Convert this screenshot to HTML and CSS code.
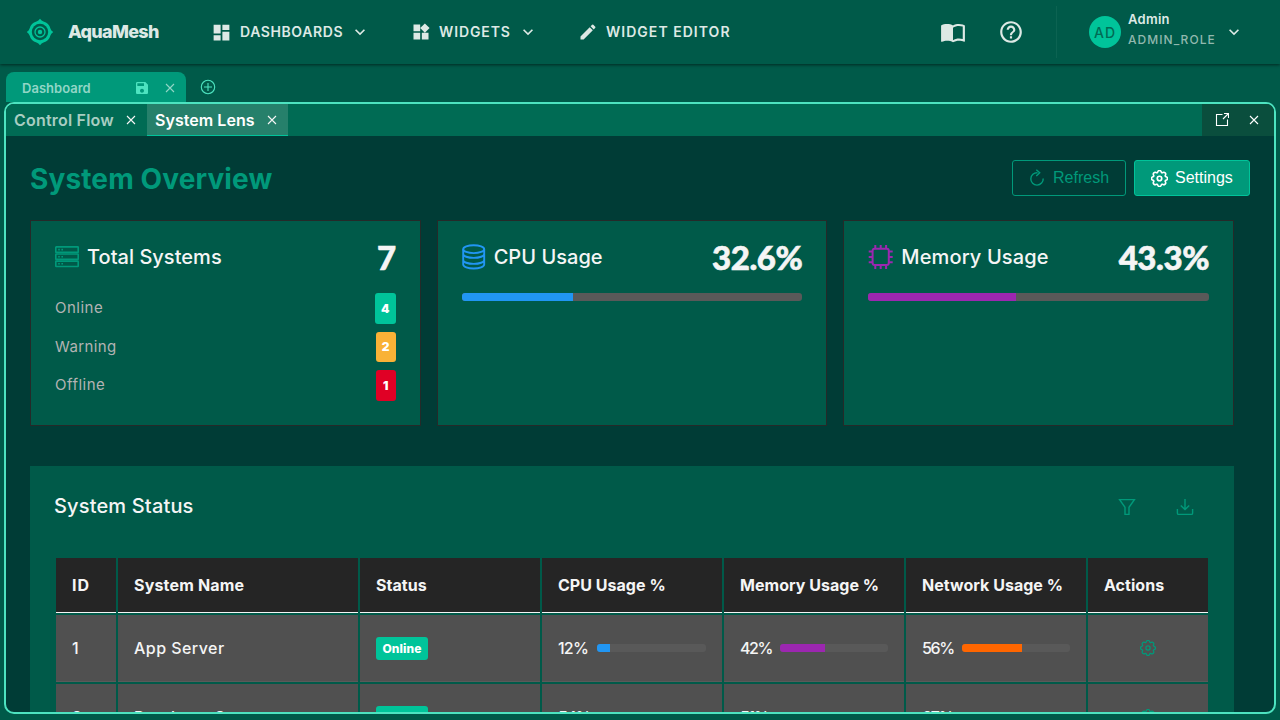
FILE: index.html
```html
<!DOCTYPE html>
<html lang="en">
<head>
<meta charset="utf-8">
<title>AquaMesh</title>
<link rel="stylesheet" href="styles.css">
</head>
<body>
<svg class="defs" width="0" height="0">
  <symbol id="chevron" viewBox="0 0 24 24"><path fill="currentColor" d="M7.41 8.59 12 13.17l4.59-4.58L18 10l-6 6-6-6z"/></symbol>
  <symbol id="close" viewBox="0 0 10 10"><path d="M1 1l8 8M9 1l-8 8" fill="none" stroke="currentColor" stroke-width="1.1"/></symbol>
  <symbol id="gear" viewBox="0 0 16 16"><g fill="none" stroke="currentColor"><circle cx="8" cy="8" r="2.1"/><path transform="translate(.5 .5) scale(.9375)" d="M9.796 1.343c-.527-1.79-3.065-1.79-3.592 0l-.094.319a.873.873 0 0 1-1.255.52l-.292-.16c-1.64-.892-3.433.902-2.54 2.541l.159.292a.873.873 0 0 1-.52 1.255l-.319.094c-1.79.527-1.79 3.065 0 3.592l.319.094a.873.873 0 0 1 .52 1.255l-.16.292c-.892 1.64.901 3.434 2.541 2.54l.292-.159a.873.873 0 0 1 1.255.52l.094.319c.527 1.79 3.065 1.79 3.592 0l.094-.319a.873.873 0 0 1 1.255-.52l.292.16c1.64.893 3.434-.902 2.54-2.541l-.159-.292a.873.873 0 0 1 .52-1.255l.319-.094c1.79-.527 1.79-3.065 0-3.592l-.319-.094a.873.873 0 0 1-.52-1.255l.16-.292c.893-1.64-.902-3.433-2.541-2.54l-.292.159a.873.873 0 0 1-1.255-.52z"/></g></symbol>
</svg>

<header class="navbar">
  <svg class="logo" width="28" height="28" viewBox="0 0 28 28"><path d="M14 .8Q15.500 3 17.500 3.600Q23 5 24.400 10.500Q25 12.500 27.200 14Q25 15.500 24.400 17.500Q23 23 17.500 24.400Q15.500 25 14 27.200Q12.500 25 10.500 24.400Q5 23 3.600 17.500Q3 15.500 .8 14Q3 12.500 3.600 10.500Q5 5 10.500 3.600Q12.500 3 14 .8z" fill="#00c49a"/><circle cx="14" cy="14" r="8.200" fill="#005a49"/><circle cx="14" cy="14" r="5" fill="none" stroke="#00c49a" stroke-width="1.300"/><circle cx="14" cy="14" r="2.200" fill="#00c49a"/></svg>
  <span class="brand">AquaMesh</span>
  <a class="nav-item dashboards"><svg width="21" height="21" viewBox="0 0 24 24"><path fill="currentColor" d="M3 13h8V3H3v10zm0 8h8v-6H3v6zm10 0h8V11h-8v10zm0-18v6h8V3h-8z"/></svg><span>DASHBOARDS</span><svg class="chev" width="20" height="20"><use href="#chevron"/></svg></a>
  <a class="nav-item widgets"><svg width="20" height="20" viewBox="0 0 24 24"><path fill="currentColor" d="M13 13v8h8v-8h-8zM3 21h8v-8H3v8zM3 3v8h8V3H3zm13.660-1.310L11 7.340 16.660 13l5.660-5.660-5.660-5.650z"/></svg><span>WIDGETS</span><svg class="chev" width="20" height="20"><use href="#chevron"/></svg></a>
  <a class="nav-item editor"><svg width="20" height="20" viewBox="0 0 24 24"><path fill="currentColor" d="M3 17.250V21h3.750L17.810 9.940l-3.750-3.750L3 17.250zM20.710 7.040c.39-.39.39-1.020 0-1.410l-2.340-2.340a1 1 0 0 0-1.410 0l-1.830 1.830 3.750 3.750 1.830-1.830z"/></svg><span>WIDGET EDITOR</span></a>
  <div class="nav-right">
    <svg width="26" height="26" viewBox="0 0 24 24"><path fill="currentColor" d="M21 5c-1.110-.35-2.330-.5-3.500-.5-1.950 0-4.050.4-5.500 1.500-1.450-1.100-3.550-1.500-5.500-1.500S2.450 4.900 1 6v14.650c0 .25.25.5.5.5.1 0 .15-.05.25-.05C3.100 20.450 5.050 20 6.500 20c1.950 0 4.050.4 5.500 1.500 1.350-.85 3.800-1.500 5.500-1.500 1.650 0 3.350.3 4.750 1.050.1.05.15.05.25.05.25 0 .5-.25.5-.5V6c-.6-.45-1.250-.75-2-1zm0 13.500c-1.100-.35-2.300-.5-3.500-.5-1.700 0-4.150.65-5.500 1.500V8c1.350-.85 3.800-1.500 5.500-1.500 1.200 0 2.400.15 3.500.5v11.500z"/></svg>
    <svg width="26" height="26" viewBox="0 0 24 24"><path fill="currentColor" d="M11 18h2v-2h-2v2zm1-16C6.480 2 2 6.480 2 12s4.480 10 10 10 10-4.480 10-10S17.520 2 12 2zm0 18c-4.410 0-8-3.590-8-8s3.590-8 8-8 8 3.590 8 8-3.590 8-8 8zm0-14c-2.210 0-4 1.790-4 4h2c0-1.100.9-2 2-2s2 .9 2 2c0 2-3 1.750-3 5h2c0-2.250 3-2.500 3-5 0-2.210-1.790-4-4-4z"/></svg>
    <div class="user">
      <span class="avatar">AD</span>
      <div class="who"><div class="name">Admin</div><div class="role">ADMIN_ROLE</div></div>
      <svg class="chev" width="20" height="20"><use href="#chevron"/></svg>
    </div>
  </div>
</header>

<div class="doc-tabs">
  <div class="doc-tab"><span>Dashboard</span>
    <svg width="16" height="16" viewBox="0 0 24 24"><path fill="currentColor" d="M17 3H5c-1.110 0-2 .9-2 2v14c0 1.100.89 2 2 2h14c1.100 0 2-.9 2-2V7l-4-4zm-5 16c-1.660 0-3-1.340-3-3s1.340-3 3-3 3 1.340 3 3-1.340 3-3 3zm3-10H5V5h10v4z"/></svg>
    <svg class="doc-close" width="10" height="10"><use href="#close"/></svg>
  </div>
  <svg class="add" width="16" height="16" viewBox="0 0 16 16"><g fill="none" stroke="currentColor" stroke-width="1.100"><circle cx="8" cy="8" r="6.700"/><path d="M8 4v8M4 8h8"/></g></svg>
</div>

<main class="panel">
  <div class="panel-tabs">
    <div class="panel-tab"><span>Control Flow</span><svg width="10" height="10"><use href="#close"/></svg></div>
    <div class="panel-tab active"><span>System Lens</span><svg width="10" height="10"><use href="#close"/></svg></div>
    <div class="panel-actions">
      <svg width="14" height="14" viewBox="0 0 14 14"><path fill="none" stroke="currentColor" stroke-width="1.100" d="M7.500 1.500H1.500v11H12.500V6.500M9 .5h4.500V5M13.500.5L8 6"/></svg>
      <svg width="10" height="10"><use href="#close"/></svg>
    </div>
  </div>

  <div class="content">
    <div class="page-head">
      <h1>System Overview</h1>
      <button class="btn ghost"><svg width="16" height="18" viewBox="0 0 16 18"><path fill="none" stroke="currentColor" stroke-width="1.400" d="M8.500 3.700A6.200 6.200 0 1 0 14.200 9.500M7.300.7l3.400 3-3.400 3.200"/></svg><span>Refresh</span></button>
      <button class="btn solid"><svg width="17" height="17" stroke-width="1.600"><use href="#gear"/></svg><span>Settings</span></button>
    </div>

    <div class="cards">
      <section class="card">
        <div class="card-head">
          <svg class="server" width="24" height="22" viewBox="0 0 24 22"><g fill="none" stroke="currentColor" stroke-width="1.600"><rect x=".8" y=".9" width="22.400" height="5.400" rx=".4"/><rect x=".8" y="8" width="22.400" height="5.400" rx=".4"/><rect x=".8" y="15.100" width="22.400" height="5.400" rx=".4"/><path d="M3.200 3.600h1.600M6.400 3.600H8M3.200 10.700h1.600M6.400 10.700H8M3.200 17.800h1.600M6.400 17.800H8"/></g></svg>
          <h2 class="t1">Total Systems</h2><strong class="count">7</strong>
        </div>
        <div class="stat"><span>Online</span><b class="ok">4</b></div>
        <div class="stat"><span class="warn-label">Warning</span><b class="warn">2</b></div>
        <div class="stat"><span>Offline</span><b class="bad">1</b></div>
      </section>
      <section class="card">
        <div class="card-head">
          <svg class="db" width="24" height="26" viewBox="0 0 24 26"><g fill="none" stroke="currentColor" stroke-width="1.900"><ellipse cx="11.700" cy="5.200" rx="10.500" ry="3.900"/><path d="M1.200 5.200v15.400c0 2.100 4.700 3.900 10.500 3.900s10.500-1.800 10.500-3.900V5.200M1.200 10c0 2.100 4.700 3.900 10.500 3.900s10.500-1.800 10.500-3.900M1.200 16c0 2.100 4.700 3.900 10.500 3.900s10.500-1.800 10.500-3.900"/></g></svg>
          <h2>CPU Usage</h2><strong>32.6%</strong>
        </div>
        <div class="bar"><i class="blue" style="width:32.600%"></i></div>
      </section>
      <section class="card">
        <div class="card-head">
          <svg class="chip" width="25" height="26" viewBox="0 0 25 26"><g fill="none" stroke="currentColor" stroke-width="2"><rect x="4.600" y="4.700" width="16.200" height="16.400" rx="2"/><path d="M7.300 4.500V1M12.700 4.500V1M18.100 4.500V1M7.300 21.500V25M12.700 21.500V25M18.100 21.500V25M4.500 7.500H.7M4.500 12.900H.7M4.500 18.300H.7M21 7.500h3.700M21 12.900h3.700M21 18.300h3.700"/></g></svg>
          <h2 class="t3">Memory Usage</h2><strong>43.3%</strong>
        </div>
        <div class="bar"><i class="purple" style="width:43.300%"></i></div>
      </section>
    </div>

    <section class="status">
      <div class="status-head">
        <h2>System Status</h2>
        <svg width="18" height="18" viewBox="0 0 18 18"><path fill="none" stroke="currentColor" stroke-width="1.400" d="M1.600 1.600h14.800L11 9.300v7.100H7V9.300z"/></svg>
        <svg width="18" height="18" viewBox="0 0 18 18"><path fill="none" stroke="currentColor" stroke-width="1.400" d="M9 1v10.500M4.800 7.500L9 11.600l4.200-4.100M1.400 11v4.200q0 1.200 1.200 1.200h12.800q1.200 0 1.200-1.200V11"/></svg>
      </div>
      <div class="table">
        <div class="th id">ID</div><div class="th name-h">System Name</div><div class="th">Status</div><div class="th">CPU Usage %</div><div class="th">Memory Usage %</div><div class="th">Network Usage %</div><div class="th">Actions</div>

        <div class="td">1</div><div class="td">App Server</div><div class="td"><b class="pill">Online</b></div>
        <div class="td"><span class="pct first">12%</span><div class="bar"><i class="blue" style="width:12%"></i></div></div>
        <div class="td"><span class="pct">42%</span><div class="bar"><i class="purple" style="width:42%"></i></div></div>
        <div class="td"><span class="pct">56%</span><div class="bar"><i class="orange" style="width:56%"></i></div></div>
        <div class="td act"><svg width="16" height="16" stroke-width="1.300"><use href="#gear"/></svg></div>

        <div class="td">2</div><div class="td">Database Server</div><div class="td"><b class="pill">Online</b></div>
        <div class="td"><span class="pct">54%</span><div class="bar"><i class="blue" style="width:54%"></i></div></div>
        <div class="td"><span class="pct">51%</span><div class="bar"><i class="purple" style="width:51%"></i></div></div>
        <div class="td"><span class="pct">67%</span><div class="bar"><i class="orange" style="width:67%"></i></div></div>
        <div class="td act"><svg width="16" height="16" stroke-width="1.300"><use href="#gear"/></svg></div>
      </div>
    </section>
  </div>
</main>
</body>
</html>
```
FILE: styles.css
```css
* { box-sizing: border-box; }
html, body { height: 100%; }
body {
  margin: 0;
  display: flex;
  flex-direction: column;
  overflow: hidden;
  background: #005a49;
  color: #f5f5f5;
  font-family: Inter, "Open Sans", sans-serif;
  font-size: 16px;
  white-space: nowrap;
}
svg { display: block; flex: none; }
.defs { position: absolute; }
h1, h2 { margin: 0; }

.navbar {
  flex: none;
  height: 64px;
  display: flex;
  align-items: center;
  padding: 0 36px 0 26px;
  color: #dde9e5;
  box-shadow: 0 1px 3px rgba(0, 0, 0, .55);
}
.brand { width: 157px; padding-left: 14px; margin-top: -1px; font-size: 18px; font-weight: 800; letter-spacing: -.7px; }
.nav-item { display: flex; align-items: center; font-size: 14px; font-weight: 600; }
.nav-item span { margin: -1px 0 0 8px; }
.nav-item .chev { margin-left: 7px; }
.dashboards { width: 200px; letter-spacing: .6px; }
.widgets { width: 167px; letter-spacing: .9px; }
.editor { letter-spacing: 1.03px; }
.nav-right { margin-left: auto; display: flex; align-items: center; gap: 32px; }
.user { height: 52px; display: flex; align-items: center; padding-left: 32px; border-left: 1px solid #0c6352; }
.avatar {
  width: 32px; height: 32px; border-radius: 50%;
  background: #00c49a; color: #006b54;
  display: grid; place-items: center;
  font-size: 14px; font-weight: 500; letter-spacing: 1px;
}
.who { width: 95px; padding-left: 7px; }
.name { font-size: 13px; line-height: 20px; font-weight: 600; letter-spacing: .27px; margin-top: -4px; }
.role { font-size: 12px; line-height: 22px; font-weight: 500; letter-spacing: 1.02px; color: #91b8ae; }
.user .chev { margin-left: 8px; }

.doc-tabs { flex: none; height: 38px; padding: 8px 0 0 6px; display: flex; }
.doc-tab {
  width: 180px; padding: 2px 11px 0 16px;
  display: flex; align-items: center;
  background: #00997a; color: #4de3c0;
  border-radius: 8px 8px 0 0;
}
.doc-tab span { flex: 1; color: #91d6c6; font-size: 13px; font-weight: 600; letter-spacing: .02px; }
.doc-close { margin-left: 15px; color: #91d6c6; }
.add { margin: 7px 0 0 14px; color: #4de3c0; }

.panel {
  flex: 1; min-height: 0;
  margin: 0 4px 6px;
  display: flex; flex-direction: column;
  overflow: hidden;
  border: 2px solid #4de3c0;
  border-radius: 10px;
  background: #003c36;
}
.panel-tabs { flex: none; height: 32px; display: flex; background: #006b54; }
.panel-tab {
  width: 141px; padding: 0 11px 0 8px;
  display: flex; align-items: center; justify-content: space-between;
  font-weight: 600; letter-spacing: .2px;
}
.panel-tab span { color: #a8cec2; }
.panel-tab.active { background: #26806b; border-bottom: 1px solid #00c49a; letter-spacing: .05px; }
.panel-tab.active span { color: #fff; }
.panel-actions {
  width: 72px; margin-left: auto; padding: 0 15px 0 13px;
  display: flex; align-items: center; justify-content: space-between;
  background: #0a4e3d; color: #fff;
}

.content { padding: 24px; }
.page-head { height: 36px; display: flex; align-items: center; gap: 8px; }
h1 { flex: 1; margin-top: 1px; color: #00997a; font-size: 28px; font-weight: 700; letter-spacing: .12px; }
.btn {
  height: 36px; padding: 0 16px;
  display: flex; align-items: center; gap: 8px;
  border: 1px solid #00997a; border-radius: 3px;
  font: 16px "Liberation Sans", Arial, sans-serif;
}
.ghost { width: 114px; background: transparent; color: #00997a; }
.solid { width: 116px; gap: 7px; background: #00997a; color: #fff; border-color: #00c49a; }

.cards {
  width: 1204px; height: 206px; margin-top: 24px;
  display: grid; grid-template-columns: repeat(3, 1fr); gap: 16px;
}
.card { padding: 16px 24px; border: 1px solid #252a29; background: #005a49; }
.card-head { height: 40px; display: flex; align-items: center; margin-bottom: 16px; }
h2 { font-size: 20px; font-weight: 550; letter-spacing: .03px; }
.card-head h2 { flex: 1; padding-left: 8px; }
h2.t3 { letter-spacing: .12px; }
.card-head strong { font: 900 33px Lato, sans-serif; letter-spacing: -.45px; -webkit-text-stroke: .6px currentColor; }
.server { color: #00997a; }
.db { color: #2196f3; }
.chip { color: #9c27b0; }
.stat { height: 30.500px; margin-bottom: 8px; display: flex; align-items: center; justify-content: space-between; color: #b3b3b3; font-size: 15px; letter-spacing: .5px; }
.stat span { margin-top: -1px; }
.stat .warn-label { letter-spacing: .4px; margin-top: 0; }
.stat b {
  width: 20px; height: 30.500px; border-radius: 3px;
  display: grid; place-items: center;
  color: #fff; font-size: 12px; font-weight: 900; letter-spacing: 0;
}
.stat .ok { width: 21px; background: #00c49a; }
.warn { background: #f9b237; }
.bad { background: #e00025; }
.bar { flex: 1; height: 8px; border-radius: 3px; overflow: hidden; background: #595959; }
.bar i { display: block; height: 100%; }
.blue { background: #2196f3; }
.purple { background: #9c27b0; }
.orange { background: #ff6600; }

.status { width: 1204px; margin-top: 40px; padding: 24px; background: #005a49; }
.status-head { height: 34px; padding-right: 16px; display: flex; align-items: center; gap: 40px; color: #00997a; }
.status-head h2 { flex: 1; color: #f5f5f5; letter-spacing: .16px; margin-top: -2px; }
.table {
  display: grid;
  grid-template-columns: 60px 240px repeat(4, 180px) 120px;
  gap: 2px;
  margin: 34px 2px 0;
}
.th { height: 55px; padding: 0 16px; display: flex; align-items: center; background: #252525; border-bottom: 1px solid #f5f5f5; font-weight: 700; letter-spacing: .03px; }
.name-h { letter-spacing: .17px; }
.id { letter-spacing: 1px; }
.td { height: 67px; padding: 0 16px; display: flex; align-items: center; background: #505050; border-bottom: 1px solid #5a5a5a; font-weight: 500; letter-spacing: .45px; }
.pill { width: 52px; height: 23px; border-radius: 3px; display: grid; place-items: center; background: #00c49a; color: #fff; font-size: 12px; font-weight: 800; letter-spacing: .1px; }
.pct { width: 40px; letter-spacing: -1.4px; }
.pct.first { width: 39px; letter-spacing: -.8px; }
.act { justify-content: center; color: #00997a; }
```
